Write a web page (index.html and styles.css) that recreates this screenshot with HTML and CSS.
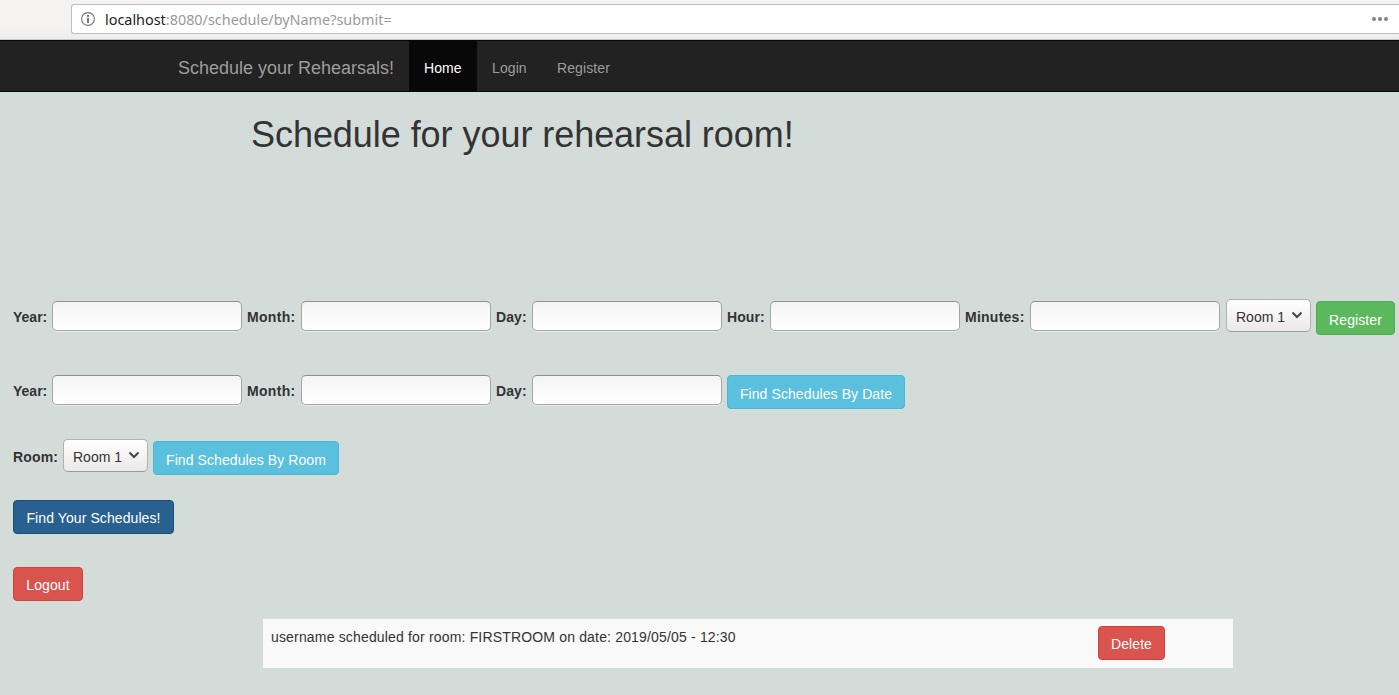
FILE: index.html
```html
<!DOCTYPE html>
<html lang="en">
<head>
<meta charset="utf-8">
<title>Schedule your Rehearsals!</title>
<link rel="stylesheet" href="styles.css">
</head>
<body>
<header class="toolbar">
  <div class="address">
    <svg class="info" width="14" height="14" viewBox="0 0 14 14"><circle cx="7" cy="7" r="6.4" fill="none" stroke="#737373" stroke-width="1.1"/><path d="M6 3h2v2H6zM6 6h2v5H6z" fill="#737373"/></svg>
    <span class="url"><span class="host">localhost</span>:8080/schedule/byName?submit=</span>
    <svg class="dots" width="16" height="4" viewBox="0 0 16 4" fill="#808080"><circle cx="2" cy="2" r="2"/><circle cx="8" cy="2" r="2"/><circle cx="14" cy="2" r="2"/></svg>
  </div>
</header>
<nav class="navbar">
  <a class="brand"><span>Schedule your Rehearsals!</span></a>
  <a class="nav-link active">Home</a>
  <a class="nav-link login">Login</a>
  <a class="nav-link">Register</a>
</nav>
<main>
  <h1 class="title">Schedule for your rehearsal room!</h1>
  <form class="row row-register">
    <label class="label year">Year:</label><input class="field">
    <label class="label month">Month:</label><input class="field">
    <label class="label day">Day:</label><input class="field">
    <label class="label hour">Hour:</label><input class="field">
    <label class="label minutes">Minutes:</label><input class="field last">
    <div class="select"><span>Room 1</span><svg width="12" height="8" viewBox="0 0 12 8"><path d="M1.500 1.500L6 6l4.500-4.500" fill="none" stroke="#454545" stroke-width="2"/></svg></div>
    <button type="button" class="btn success low">Register</button>
  </form>
  <form class="row row-date">
    <label class="label year">Year:</label><input class="field">
    <label class="label month">Month:</label><input class="field">
    <label class="label day">Day:</label><input class="field">
    <button type="button" class="btn info-btn date low">Find Schedules By Date</button>
  </form>
  <form class="row row-room">
    <label class="label room">Room:</label>
    <div class="select"><span>Room 1</span><svg width="12" height="8" viewBox="0 0 12 8"><path d="M1.500 1.500L6 6l4.500-4.500" fill="none" stroke="#454545" stroke-width="2"/></svg></div>
    <button type="button" class="btn info-btn by-room low">Find Schedules By Room</button>
  </form>
  <div class="row row-own"><button type="button" class="btn primary">Find Your Schedules!</button></div>
  <div class="row row-logout"><button type="button" class="btn danger logout">Logout</button></div>
  <section class="schedule">
    <span class="entry">username scheduled for room: FIRSTROOM on date: 2019/05/05 - 12:30</span>
    <button type="button" class="btn danger delete">Delete</button>
  </section>
</main>
</body>
</html>
```
FILE: styles.css
```css
* { box-sizing: border-box; }
body { margin: 0; background: #d3dcd9; color: #333; font: 14px/20px "Liberation Sans", Arial, sans-serif; height: 695px; overflow: hidden; }
.toolbar { height: 40px; padding: 4px 0 0 71px; background: linear-gradient(#f4f3f2 70%, #eeedeb); border-bottom: 1px solid #c9c7c4; }
.address { height: 30px; display: flex; align-items: center; background: #fff; border: 1px solid #bfbfbf; border-right: 0; border-radius: 3px 0 0 3px; padding: 0 11px 0 9px; }
.url { margin-left: 10px; padding-top: 1px; color: #999; font: 14.4px/20px "Noto Sans", "Open Sans", sans-serif; white-space: nowrap; }
.host { color: #222; }
.dots { margin-left: auto; }
.navbar { height: 52px; display: flex; background: #222; border: solid #080808; border-width: 1px 0; padding-left: 163px; }
.brand { width: 246px; padding: 17px 15px; font-size: 18px; color: #9d9d9d; white-space: nowrap; }
.nav-link { padding: 17px 15px 13px; color: #9d9d9d; letter-spacing: .1px; white-space: nowrap; }
.nav-link.active { width: 68px; background: #080808; color: #fff; }
.nav-link.login { width: 65px; }
.title { margin: 23px 0 0 251px; font-size: 36px; line-height: 40px; font-weight: 400; letter-spacing: -.05px; white-space: nowrap; }
.row { display: flex; align-items: flex-start; gap: 5px; padding-left: 13px; }
.row-register { margin-top: 144px; height: 74px; }
.row-date { height: 66px; }
.row-room { height: 59px; }
.row-own { height: 67px; padding-top: 2px; }
.row-logout { height: 53px; padding-top: 2px; }
.label { flex: none; margin-top: 8px; font-weight: 700; white-space: nowrap; }
.year { width: 34px; }
.month { width: 49px; letter-spacing: .3px; }
.day { width: 31px; letter-spacing: .1px; }
.hour { width: 38px; letter-spacing: .1px; }
.minutes { width: 60px; letter-spacing: .25px; }
.room { width: 45px; letter-spacing: .15px; }
.field { flex: none; width: 190px; height: 30px; margin: 2px 0 0; padding: 4px 8px; border: 1px solid #a5a5a3; border-top-color: #8e8e8c; border-radius: 5px; background: linear-gradient(#f4f4f4, #fff); box-shadow: 0 1px #e9edec; outline: 0; }
.field.last { margin-right: 1px; }
.select { flex: none; width: 85px; height: 33px; display: flex; align-items: center; gap: 6px; padding: 2px 7px 0 9px; border: 1px solid #b2b2b0; border-bottom-color: #999; border-radius: 5px; background: linear-gradient(#fff, #ebe9e7); white-space: nowrap; }
.select svg { flex: none; margin-top: -4px; }
.btn { flex: none; height: 34px; padding: 1px 0 0; border: 1px solid; border-radius: 4px; color: #fff; font: 14px/20px "Liberation Sans", Arial, sans-serif; letter-spacing: .09px; white-space: nowrap; }
.low { margin-top: 2px; padding-top: 3px; }
.success { width: 79px; background: #5cb85c; border-color: #4cae4c; }
.info-btn { background: #5bc0de; border-color: #46b8da; }
.date { width: 178px; }
.by-room { width: 186px; }
.primary { width: 161px; background: #286090; border-color: #204d74; }
.danger { background: #d9534f; border-color: #d43f3a; }
.logout { width: 70px; }
.delete { width: 67px; }
.schedule { width: 970px; height: 50px; margin-left: 263px; padding: 7px 68px 0 8px; display: flex; justify-content: space-between; background: #f9f9f9; border-top: 1px solid #ddd; }
.entry { margin-top: 1px; letter-spacing: .168px; white-space: nowrap; }
```
